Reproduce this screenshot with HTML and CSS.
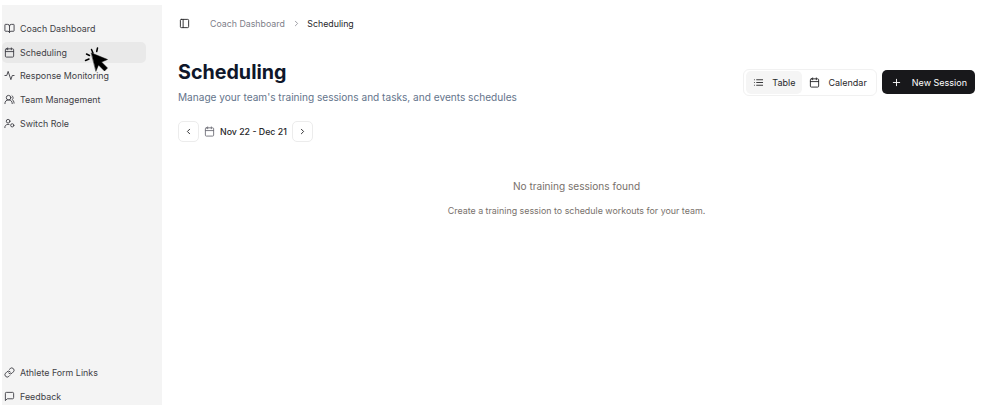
FILE: index.html
```html
<!DOCTYPE html>
<html>
  <head>
    <meta charset="UTF-8" />
    <meta name="viewport" content="width=device-width, initial-scale=1.0" />
    <title>Scheduling</title>
    <link rel="stylesheet" href="styles.css">
  </head>
  <body>
    <div class="wrapper">
      <aside class="sidebar">
        <nav class="nav">
          <a class="nav-item">
            <svg class="icon" viewBox="0 0 24 24"><path d="M12 7v14"/><path d="M3 18a1 1 0 0 1-1-1V4a1 1 0 0 1 1-1h5a4 4 0 0 1 4 4 4 4 0 0 1 4-4h5a1 1 0 0 1 1 1v13a1 1 0 0 1-1 1h-6a3 3 0 0 0-3 3 3 3 0 0 0-3-3z"/></svg>
            Coach Dashboard
          </a>
          <a class="nav-item active">
            <svg class="icon" viewBox="0 0 24 24"><path d="M8 2v4"/><path d="M16 2v4"/><rect x="3" y="4" width="18" height="18" rx="2"/><path d="M3 10h18"/></svg>
            Scheduling
          </a>
          <a class="nav-item">
            <svg class="icon" viewBox="0 0 24 24"><path d="M22 12h-4l-3 9L9 3l-3 9H2"/></svg>
            Response Monitoring
          </a>
          <a class="nav-item">
            <svg class="icon" viewBox="0 0 24 24"><path d="M18 21a8 8 0 0 0-16 0"/><circle cx="10" cy="8" r="5"/><path d="M22 20c0-3.37-2-6.5-4-8a5 5 0 0 0-.45-8.3"/></svg>
            Team Management
          </a>
          <a class="nav-item">
            <svg class="icon" viewBox="0 0 24 24"><circle cx="9" cy="7" r="4"/><path d="M2 21v-2a7 7 0 0 1 9-5"/><circle cx="18" cy="16" r="3.5"/></svg>
            Switch Role
          </a>
        </nav>
        <nav class="nav nav-bottom">
          <a class="nav-item">
            <svg class="icon" viewBox="0 0 24 24"><path d="M10 13a5 5 0 0 0 7.54.54l3-3a5 5 0 0 0-7.07-7.07l-1.72 1.71"/><path d="M14 11a5 5 0 0 0-7.54-.54l-3 3a5 5 0 0 0 7.07 7.07l1.71-1.71"/></svg>
            Athlete Form Links
          </a>
          <a class="nav-item">
            <svg class="icon" viewBox="0 0 24 24"><path d="M21 15a2 2 0 0 1-2 2H7l-4 4V5a2 2 0 0 1 2-2h14a2 2 0 0 1 2 2z"/></svg>
            Feedback
          </a>
        </nav>
      </aside>

      <main class="content">
        <div class="topbar">
          <svg class="icon dark" viewBox="0 0 24 24"><rect x="3" y="3" width="18" height="18" rx="2"/><path d="M9 3v18"/></svg>
          <span class="crumb">Coach Dashboard</span>
          <svg class="crumb-sep" viewBox="0 0 24 24"><path d="m9 18 6-6-6-6"/></svg>
          <span class="crumb current">Scheduling</span>
        </div>

        <div class="page-head">
          <div>
            <h1>Scheduling</h1>
            <p class="sub">Manage your team's training sessions and tasks, and events schedules</p>
          </div>
          <div class="actions">
            <div class="toggle">
              <span class="toggle-btn selected">
                <svg class="icon" viewBox="0 0 24 24"><path d="M8 6h13"/><path d="M8 12h13"/><path d="M8 18h13"/><path d="M3 6h.01"/><path d="M3 12h.01"/><path d="M3 18h.01"/></svg>
                Table
              </span>
              <span class="toggle-btn">
                <svg class="icon" viewBox="0 0 24 24"><path d="M8 2v4"/><path d="M16 2v4"/><rect x="3" y="4" width="18" height="18" rx="2"/><path d="M3 10h18"/></svg>
                Calendar
              </span>
            </div>
            <button type="button" class="new-btn">
              <svg class="icon" viewBox="0 0 24 24"><path d="M5 12h14"/><path d="M12 5v14"/></svg>
              New Session
            </button>
          </div>
        </div>

        <div class="range">
          <button type="button" class="arrow">
            <svg viewBox="0 0 24 24"><path d="m15 18-6-6 6-6"/></svg>
          </button>
          <svg class="icon muted" viewBox="0 0 24 24"><path d="M8 2v4"/><path d="M16 2v4"/><rect x="3" y="4" width="18" height="18" rx="2"/><path d="M3 10h18"/></svg>
          <span class="range-text">Nov 22 - Dec 21</span>
          <button type="button" class="arrow">
            <svg viewBox="0 0 24 24"><path d="m9 18 6-6-6-6"/></svg>
          </button>
        </div>

        <div class="empty">
          <p class="empty-title">No training sessions found</p>
          <p class="empty-text">Create a training session to schedule workouts for your team.</p>
        </div>
      </main>
    </div>

    <svg class="cursor" viewBox="0 0 26 26">
      <path class="clicks" d="M7.5 2.5l1.5 3.5M2.5 7l3 1.500M13.500 1l-.8 3.500M1.500 13.500l3.500-1.500"/>
      <path class="arrow-shape" d="M7.5 6l16 6.500-6 2.500 6 6-3 3-6-6-2.500 6z"/>
    </svg>
  </body>
</html>
```

FILE: styles.css
```css
html,
body {
  height: 100%;
}
body {
  margin: 0;
  background: white;
  font-family: "Inter", "Liberation Sans", sans-serif;
  color: #27272a;
  overflow: hidden;
}
p,
h1 {
  margin: 0;
}
svg {
  fill: none;
  stroke: currentColor;
  stroke-width: 2;
  stroke-linecap: round;
  stroke-linejoin: round;
}
.icon {
  width: 11px;
  height: 11px;
  flex-shrink: 0;
}
.wrapper {
  display: flex;
  height: 100%;
  box-sizing: border-box;
  padding: 5px 0 4px 2px;
}
.sidebar {
  width: 160px;
  box-sizing: border-box;
  padding: 13px 16px 0 0;
  background-color: #f4f4f4;
  display: flex;
  flex-direction: column;
  justify-content: space-between;
  flex-shrink: 0;
}
.nav {
  display: flex;
  flex-direction: column;
  gap: 2.7px;
}
.nav-bottom {
  margin-bottom: -1.5px;
}
.nav-item {
  display: flex;
  align-items: center;
  gap: 5px;
  height: 21px;
  padding-left: 2px;
  border-radius: 5px;
  font-size: 8.9px;
  color: #3f3f46;
}
.nav-item.active {
  background-color: #e9e9e9;
}
.content {
  flex: 1;
  padding: 0 17px 0 16px;
  min-width: 0;
}
.topbar {
  display: flex;
  align-items: center;
  height: 37px;
  font-size: 8.8px;
}
.dark {
  color: #27272a;
  margin-left: 1px;
  margin-right: 20px;
}
.crumb {
  color: #80808a;
}
.crumb.current {
  color: #27272a;
}
.crumb-sep {
  width: 9px;
  height: 9px;
  margin: 0 6.5px 0 7px;
  color: #80808a;
}
.page-head {
  display: flex;
  justify-content: space-between;
  align-items: center;
  margin-top: 18px;
}
h1 {
  font-size: 19.7px;
  font-weight: 700;
  line-height: 24px;
  color: #0f172a;
}
.sub {
  margin-top: 7px;
  font-size: 10.1px;
  line-height: 13px;
  color: #64748b;
}
.actions {
  display: flex;
  align-items: center;
  gap: 5px;
}
.toggle {
  display: flex;
  align-items: center;
  height: 25px;
  padding: 0 2px;
  border: 1px solid #f1f1f1;
  border-radius: 6px;
}
.toggle-btn {
  display: flex;
  align-items: center;
  gap: 8px;
  height: 23px;
  padding: 0 7px;
  border-radius: 5px;
  font-size: 9px;
  color: #27272a;
}
.toggle-btn.selected {
  background-color: #f5f5f5;
}
.new-btn {
  display: flex;
  align-items: center;
  gap: 10px;
  height: 24px;
  padding: 0 8px 0 9px;
  border: none;
  border-radius: 5px;
  background-color: #18181b;
  color: white;
  font-family: inherit;
  font-size: 9px;
}
.range {
  display: flex;
  align-items: center;
  margin-top: 17px;
}
.arrow {
  display: flex;
  align-items: center;
  justify-content: center;
  width: 21px;
  height: 21px;
  padding: 0;
  border: 1px solid #ececec;
  border-radius: 5px;
  background: white;
  color: #27272a;
}
.arrow svg {
  width: 9px;
  height: 9px;
  stroke-width: 2.5;
}
.muted {
  color: #71717a;
  margin: 0 5px;
}
.range-text {
  width: 72px;
  white-space: nowrap;
  font-size: 8.8px;
  font-weight: 500;
  color: #27272a;
}
.empty {
  margin-top: 38px;
  text-align: center;
}
.empty-title {
  font-size: 10.1px;
  line-height: 13px;
  color: #78716c;
}
.empty-text {
  margin-top: 12px;
  font-size: 8.9px;
  line-height: 11px;
  color: #78716c;
}
.cursor {
  position: absolute;
  left: 84px;
  top: 47px;
  width: 26px;
  height: 26px;
}
.clicks {
  stroke: black;
  stroke-width: 1.5;
}
.arrow-shape {
  fill: black;
  stroke: black;
  stroke-width: 0.5;
}
```
